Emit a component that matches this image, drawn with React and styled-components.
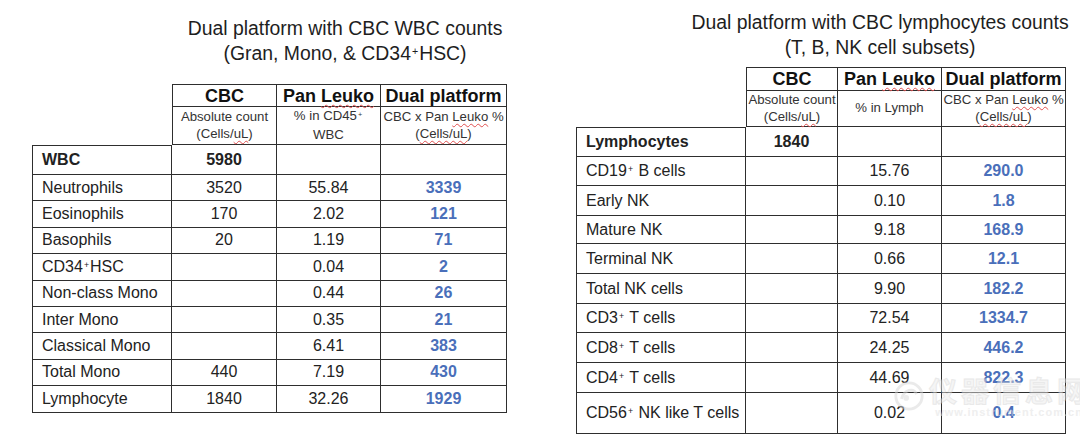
import React from "react";
import styled, { createGlobalStyle } from "styled-components";

const GlobalStyle = createGlobalStyle`
  html, body {
    margin: 0;
    padding: 0;
    background: #ffffff;
  }
  body {
    font-family: "Liberation Sans", Arial, sans-serif;
    color: #222222;
  }
`;

const leftRows = [
  { label: "WBC", cbc: "5980", pan: "", dual: "", bold: true },
  { label: "Neutrophils", cbc: "3520", pan: "55.84", dual: "3339" },
  { label: "Eosinophils", cbc: "170", pan: "2.02", dual: "121" },
  { label: "Basophils", cbc: "20", pan: "1.19", dual: "71" },
  { label: ["CD34", "HSC"], cbc: "", pan: "0.04", dual: "2" },
  { label: "Non-class Mono", cbc: "", pan: "0.44", dual: "26" },
  { label: "Inter Mono", cbc: "", pan: "0.35", dual: "21" },
  { label: "Classical Mono", cbc: "", pan: "6.41", dual: "383" },
  { label: "Total Mono", cbc: "440", pan: "7.19", dual: "430" },
  { label: "Lymphocyte", cbc: "1840", pan: "32.26", dual: "1929" },
];

const rightRows = [
  { label: "Lymphocytes", cbc: "1840", pan: "", dual: "", bold: true },
  { label: ["CD19", " B cells"], cbc: "", pan: "15.76", dual: "290.0" },
  { label: "Early NK", cbc: "", pan: "0.10", dual: "1.8" },
  { label: "Mature NK", cbc: "", pan: "9.18", dual: "168.9" },
  { label: "Terminal NK", cbc: "", pan: "0.66", dual: "12.1" },
  { label: "Total NK cells", cbc: "", pan: "9.90", dual: "182.2" },
  { label: ["CD3", " T cells"], cbc: "", pan: "72.54", dual: "1334.7" },
  { label: ["CD8", " T cells"], cbc: "", pan: "24.25", dual: "446.2" },
  { label: ["CD4", " T cells"], cbc: "", pan: "44.69", dual: "822.3" },
  { label: ["CD56", " NK like T cells"], cbc: "", pan: "0.02", dual: "0.4" },
];

function Label({ value }) {
  if (Array.isArray(value)) {
    return (
      <span>
        {value[0]}
        <Sup>+</Sup>
        {value[1]}
      </span>
    );
  }
  return <span>{value}</span>;
}

function CountTable({ cols, rows, data, panText, top }) {
  return (
    <Grid $cols={cols} $rows={rows} $top={top}>
      <Blank />
      <HeadCell $left $topBorder>CBC</HeadCell>
      <HeadCell $topBorder>
        <span>
          Pan <Typo>Leuko</Typo>
        </span>
      </HeadCell>
      <HeadCell $topBorder>Dual platform</HeadCell>

      <Blank />
      <SubCell $left>
        <span>
          Absolute count
          <br />
          (Cells/<Typo>uL</Typo>)
        </span>
      </SubCell>
      <SubCell>
        <span>{panText}</span>
      </SubCell>
      <SubCell>
        <span>
          CBC x Pan <Typo>Leuko</Typo> %
          <br />
          (<Typo>Cells/uL</Typo>)
        </span>
      </SubCell>

      {data.map((r, i) => (
        <React.Fragment key={i}>
          <LabelCell $left $topBorder={i === 0} $bold={r.bold}>
            <Label value={r.label} />
          </LabelCell>
          <Cell $bold={r.bold}>{r.cbc}</Cell>
          <Cell>{r.pan}</Cell>
          <Cell $blue>{r.dual}</Cell>
        </React.Fragment>
      ))}
    </Grid>
  );
}

export default function App() {
  return (
    <>
      <GlobalStyle />
      <Page>
        <Panel $pad={32}>
          <Title $top={16} $left={133} $width={360}>
            Dual platform with CBC WBC counts
            <br />
            (Gran, Mono, &amp; CD34<Sup>+</Sup>HSC)
          </Title>
          <CountTable
            top={16}
            cols="140px 105px 104px 126px"
            rows="23px 38px 30px repeat(9, 26.4px)"
            data={leftRows}
            panText={
              <>
                % in CD45<Sup>+</Sup>
                <br />
                WBC
              </>
            }
          />
        </Panel>
        <Panel $pad={36}>
          <Title $top={10} $left={104} $width={400}>
            Dual platform with CBC lymphocytes counts
            <br />
            (T, B, NK cell subsets)
          </Title>
          <CountTable
            top={8}
            cols="170px 92px 104px 124px"
            rows="24px 36px 30px 29px 30px 28px 30px 30px 29px 30px 30px 41px"
            data={rightRows}
            panText="% in Lymph"
          />
        </Panel>
        <Watermark>
          <svg width="32" height="32" viewBox="0 0 34 34">
            <circle cx="17" cy="17" r="14" fill="none" stroke="#d6d6d6" strokeWidth="3" />
            <path d="M9 20 C12 10, 22 8, 25 15" fill="none" stroke="#d6d6d6" strokeWidth="3" />
            <circle cx="14" cy="19" r="3" fill="#dadada" />
          </svg>
          <WatermarkText>
            <WatermarkTitle>仪器信息网</WatermarkTitle>
            <WatermarkUrl>www.instrument.com.cn</WatermarkUrl>
          </WatermarkText>
        </Watermark>
      </Page>
    </>
  );
}

const Page = styled.div`
  position: relative;
  display: flex;
  width: 1080px;
  height: 441px;
  overflow: hidden;
  background: #ffffff;
`;

const Panel = styled.section`
  display: flex;
  flex-direction: column;
  align-items: flex-start;
  width: 540px;
  box-sizing: border-box;
  padding-left: ${(p) => p.$pad}px;
`;

const Title = styled.h2`
  margin: ${(p) => p.$top}px 0 0 ${(p) => p.$left}px;
  width: ${(p) => p.$width}px;
  font-size: 19.4px;
  font-weight: 400;
  line-height: 24.5px;
  text-align: center;
  white-space: nowrap;
  color: #1e1e1e;
`;

const Grid = styled.div`
  display: grid;
  grid-template-columns: ${(p) => p.$cols};
  grid-template-rows: ${(p) => p.$rows};
  margin-top: ${(p) => p.$top}px;
  font-size: 16px;
`;

const Cell = styled.div`
  display: flex;
  align-items: center;
  justify-content: center;
  box-sizing: border-box;
  border-right: 1px solid #2e2e2e;
  border-bottom: 1px solid #2e2e2e;
  border-left: ${(p) => (p.$left ? "1px solid #2e2e2e" : "none")};
  border-top: ${(p) => (p.$topBorder ? "1px solid #2e2e2e" : "none")};
  text-align: center;
  white-space: nowrap;
  font-weight: ${(p) => (p.$bold || p.$blue ? 700 : 400)};
  color: ${(p) => (p.$blue ? "#4a6fba" : "#222222")};
`;

const LabelCell = styled(Cell)`
  justify-content: flex-start;
  padding-left: 9px;
  text-align: left;
`;

const Blank = styled.div``;

const HeadCell = styled(Cell)`
  font-size: 18px;
  font-weight: 700;
  line-height: 20px;
  color: #111111;
`;

const SubCell = styled(Cell)`
  font-size: 13.2px;
  line-height: 16.5px;
  color: #333333;
`;

const Sup = styled.span`
  position: relative;
  top: -0.45em;
  font-size: 0.55em;
  margin: 0 1px;
`;

const Typo = styled.span`
  text-decoration: underline wavy #e05050;
  text-decoration-thickness: 1px;
  text-underline-offset: 2px;
`;

const Watermark = styled.div`
  position: absolute;
  left: 893px;
  top: 374px;
  display: flex;
  align-items: center;
  gap: 4px;
  white-space: nowrap;
  opacity: 0.5;
  pointer-events: none;
`;

const WatermarkText = styled.div`
  display: flex;
  flex-direction: column;
  align-items: center;
`;

const WatermarkTitle = styled.span`
  font-family: "Noto Sans CJK SC", sans-serif;
  font-size: 28px;
  font-weight: 700;
  letter-spacing: 4px;
  line-height: 32px;
  color: #ececec;
  -webkit-text-stroke: 1px #d4d4d4;
`;

const WatermarkUrl = styled.span`
  font-family: "Liberation Sans", Arial, sans-serif;
  font-size: 11px;
  font-weight: 700;
  letter-spacing: 1px;
  color: #e0e0e0;
`;
